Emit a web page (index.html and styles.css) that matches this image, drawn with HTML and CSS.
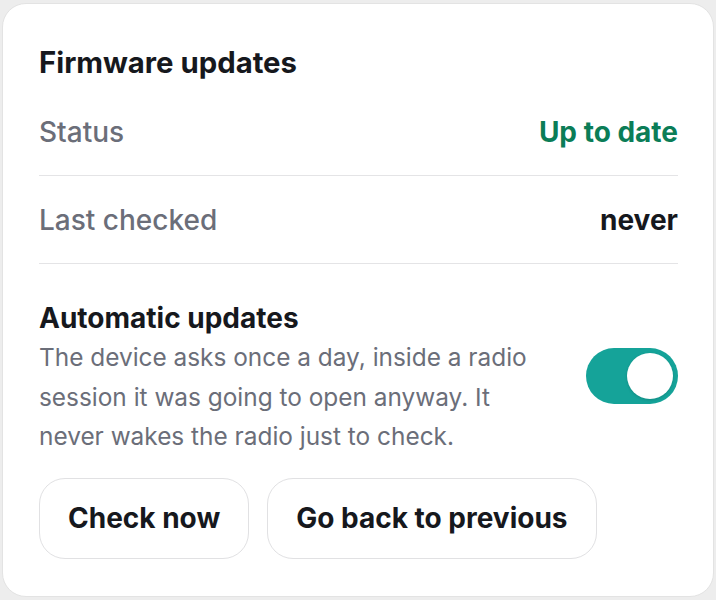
FILE: index.html
```html
<!DOCTYPE html>
<html lang="en">
<head>
<meta charset="utf-8">
<title>Firmware updates</title>
<link rel="stylesheet" href="styles.css">
</head>
<body>
<section class="card">
  <h2 class="title">Firmware updates</h2>
  <div class="row row-first">
    <span class="label">Status</span>
    <span class="value ok">Up to date</span>
  </div>
  <div class="row">
    <span class="label">Last checked</span>
    <span class="value">never</span>
  </div>
  <div class="auto">
    <div class="auto-text">
      <h3 class="auto-title">Automatic updates</h3>
      <p class="desc">The device asks once a day, inside a radio session it was going to open anyway. It never wakes the radio just to check.</p>
    </div>
    <span class="toggle" role="switch" aria-checked="true"><span class="knob"></span></span>
  </div>
  <div class="actions">
    <button class="btn">Check now</button>
    <button class="btn">Go back to previous</button>
  </div>
</section>
</body>
</html>
```
FILE: styles.css
```css
* { box-sizing: border-box; }
html, body { margin: 0; padding: 0; }
body {
  background: #ededed;
  font-family: Inter, "Noto Sans", "Liberation Sans", sans-serif;
  padding: 3px 2px;
}
.card {
  background: #fff;
  border: 1px solid #e3e3e3;
  border-radius: 24px;
  padding: 42px 35px 37px 36px;
  height: 594px;
}
.title {
  margin: 0;
  font-size: 29.3px;
  font-weight: 700;
  color: #16181d;
  line-height: 34px;
}
.row {
  display: flex;
  justify-content: space-between;
  align-items: center;
  height: 88px;
  border-bottom: 1px solid #e4e4e6;
  font-size: 28px;
  line-height: 34px;
}
.row-first { margin-top: 8px; }
.label { color: #6b6e79; font-weight: 500; }
.value { color: #16181d; font-weight: 700; }
.value.ok { color: #0b7d57; }
.auto {
  display: flex;
  align-items: center;
  justify-content: space-between;
  margin-top: 37px;
}
.auto-text { width: 520px; }
.auto-title {
  margin: 0;
  font-size: 28px;
  font-weight: 700;
  color: #16181d;
  line-height: 34px;
}
.desc {
  margin: 3px 0 0;
  font-size: 24.4px;
  line-height: 39.5px;
  color: #6b6e79;
}
.toggle {
  position: relative;
  flex: none;
  width: 92px;
  height: 56px;
  border-radius: 28px;
  background: #15a399;
  margin-bottom: 6px;
}
.knob {
  position: absolute;
  top: 5px;
  right: 5px;
  width: 46px;
  height: 46px;
  border-radius: 50%;
  background: #fff;
  box-shadow: 0 1px 3px rgba(0,0,0,0.15);
}
.actions {
  display: flex;
  gap: 18px;
  margin-top: 21px;
}
.btn {
  font-family: inherit;
  font-size: 28px;
  font-weight: 700;
  color: #16181d;
  background: #fff;
  border: 1px solid #e1e1e3;
  border-radius: 26px;
  height: 81px;
  padding: 0 28px;
}
```
